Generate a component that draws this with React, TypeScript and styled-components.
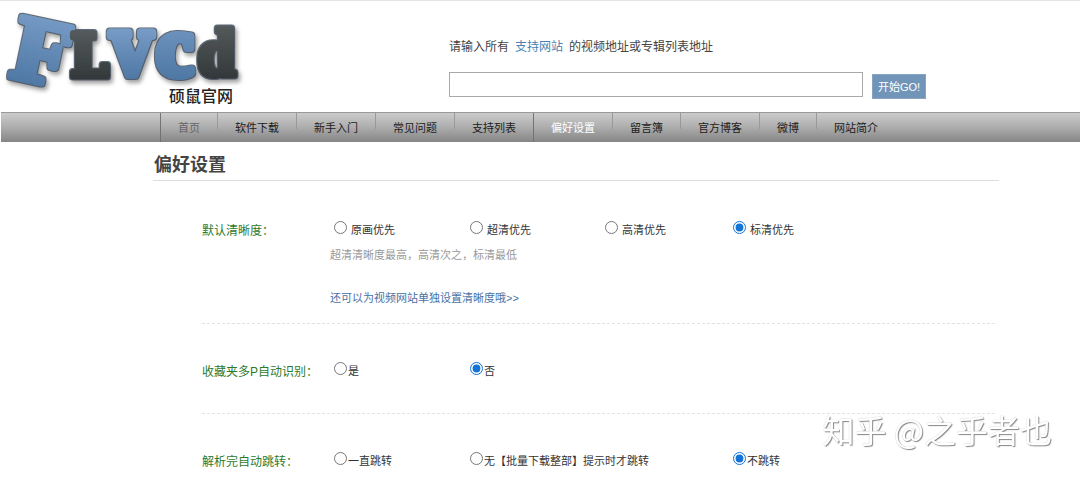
import React from 'react';
import styled, { createGlobalStyle } from 'styled-components';

const GlobalStyle = createGlobalStyle`
  * { box-sizing: border-box; }
  body {
    margin: 0;
    background: #fff;
    color: #333;
    font-family: "Liberation Sans", "Noto Sans CJK SC", sans-serif;
    font-size: 11px;
    line-height: 16px;
  }
  a { text-decoration: none; }
`;

const Page = styled.div`
  border-top: 1px solid #e4e4e4;
`;

const Header = styled.header`
  display: flex;
  align-items: flex-start;
  height: 111px;
  padding-right: 154px;
`;

const LogoLink = styled.a`
  flex: none;
  width: 250px;
  margin-right: 199px;
  svg { display: block; }
`;

const SearchForm = styled.form`
  flex: 1;
  min-width: 0;
  padding-top: 36px;
`;

const Prompt = styled.label`
  display: block;
  font-size: 12px;
  line-height: 20px;
  color: #444;
`;

const PromptLink = styled.a`
  margin: 0 6px;
  color: #4a7fb0;
`;

const SearchRow = styled.div`
  display: flex;
  align-items: flex-end;
  gap: 9px;
  padding-top: 15px;
`;

const AddressInput = styled.input`
  flex: 1;
  min-width: 0;
  height: 25px;
  padding: 0 6px;
  border: 1px solid #aaa;
  background: #fff;
  font: inherit;
`;

const GoButton = styled.button`
  width: 54px;
  height: 25px;
  margin-bottom: -2px;
  padding: 0;
  border: 1px solid #86a3c0;
  background: #7195b8;
  color: #fff;
  font: inherit;
  white-space: nowrap;
`;

const Nav = styled.nav`
  display: flex;
  height: 30px;
  margin-left: 1px;
  padding-left: 159px;
  border-top: 1px solid #999;
  background: linear-gradient(#cbcbcb, #b0b0b0 45%, #858585);
`;

const NavItem = styled.a<{ $tone?: string; $strong?: boolean }>`
  padding: 7px 17px 0;
  border-left: 1px solid;
  border-image: ${(p) =>
    p.$strong
      ? 'linear-gradient(#777, #707070) 1'
      : 'linear-gradient(#999 55%, transparent 55%) 1'};
  color: ${(p) => p.$tone || '#1c1c1c'};
  white-space: nowrap;
`;

const Main = styled.main`
  margin: 0 81px 0 153px;
`;

const Title = styled.h1`
  margin: 0;
  padding: 11px 0 3px 1px;
  border-bottom: 1px solid #ddd;
  color: #444;
  font-size: 18px;
  line-height: 24px;
`;

const Setting = styled.fieldset`
  display: flex;
  margin: 0 4px 0 49px;
  padding: 36px 0 33px;
  border: 0;
  border-bottom: 1px dashed #e2e2e2;
  &:first-of-type { padding: 38px 0 17px; }
  &:last-of-type { border-bottom: 0; padding-bottom: 0; }
`;

const SettingName = styled.div`
  flex: none;
  width: 128px;
  padding-top: 4px;
  color: #2c7a2c;
  font-size: 12px;
`;

const Options = styled.div`
  display: grid;
  grid-template-columns: 136px 135px 128px auto;
`;

const OptionLabel = styled.label<{ $column: number; $spaced?: boolean }>`
  grid-row: 1;
  grid-column-start: ${(p) => p.$column};
  display: flex;
  align-items: flex-start;
  gap: ${(p) => (p.$spaced ? 4 : 1)}px;
  padding: 2px 0 0 4px;
  white-space: nowrap;
`;

const Radio = styled.input`
  width: 13px;
  height: 13px;
  margin: 0;
  accent-color: #1473d6;
`;

const Caption = styled.span`
  padding-top: 1px;
`;

const Hint = styled.p`
  margin: 0;
  padding-top: 9px;
  color: #999;
`;

const MoreLink = styled.a`
  display: inline-block;
  padding-top: 27px;
  color: #4a6fa5;
`;

const Watermark = styled.div`
  position: fixed;
  right: 28px;
  bottom: 28px;
  color: #fff;
  font-family: "Noto Sans CJK SC", sans-serif;
  font-size: 32px;
  line-height: 40px;
  text-shadow: 1px 1px 1px #888, 0 0 1px #bbb;
  white-space: nowrap;
  pointer-events: none;
`;

function Logo() {
  const slab = '"DejaVu Serif Condensed", "DejaVu Serif", serif';
  const round = '"Liberation Serif", serif';
  return (
    <svg width="250" height="110" viewBox="0 1 250 110" role="img" aria-label="FLVcd 硕鼠官网">
      <defs>
        <linearGradient id="blue" x1="0" y1="0" x2="0" y2="1">
          <stop offset="0" stopColor="#7da2cc" />
          <stop offset="1" stopColor="#47709d" />
        </linearGradient>
        <linearGradient id="dark" x1="0" y1="0" x2="0" y2="1">
          <stop offset="0" stopColor="#5a6061" />
          <stop offset="1" stopColor="#2c3133" />
        </linearGradient>
        <filter id="relief" x="-10%" y="-10%" width="125%" height="130%">
          <feMorphology in="SourceAlpha" operator="dilate" radius="1" result="edge" />
          <feFlood floodColor="#3a4a5c" floodOpacity="0.8" />
          <feComposite in2="edge" operator="in" result="rim" />
          <feGaussianBlur in="edge" stdDeviation="2" result="soft" />
          <feOffset in="soft" dx="2" dy="3" result="shade" />
          <feFlood floodColor="#777" floodOpacity="0.7" />
          <feComposite in2="shade" operator="in" result="shadow" />
          <feMerge>
            <feMergeNode in="shadow" />
            <feMergeNode in="rim" />
            <feMergeNode in="SourceGraphic" />
          </feMerge>
        </filter>
      </defs>
      <g filter="url(#relief)" fontWeight="700" strokeLinejoin="round" strokeWidth="8">
        <g fill="url(#blue)" stroke="url(#blue)">
          <text x="15" y="82" fontFamily={round} fontSize="92" strokeWidth="7" transform="rotate(12 40 48)">F</text>
          <text x="111" y="75" fontFamily={slab} fontSize="58">V</text>
          <text x="156" y="75" fontFamily={round} fontSize="84">c</text>
        </g>
        <g fill="url(#dark)" stroke="url(#dark)">
          <text x="71" y="76" fontFamily={slab} fontSize="58" strokeWidth="7">L</text>
          <text x="198" y="75" fontFamily={round} fontSize="66" strokeWidth="7">d</text>
        </g>
      </g>
      <text x="169" y="102" fontFamily="Noto Sans CJK SC, sans-serif" fontSize="16" fontWeight="500" fill="#222">
        硕鼠官网
      </text>
    </svg>
  );
}

const navItems = [
  { text: '首页', tone: '#666', strong: true },
  { text: '软件下载' },
  { text: '新手入门' },
  { text: '常见问题' },
  { text: '支持列表' },
  { text: '偏好设置', tone: '#fff', strong: true },
  { text: '留言簿' },
  { text: '官方博客' },
  { text: '微博' },
  { text: '网站简介' },
];

type Choice = { text: string; column: number; checked?: boolean };

function Choices({ name, items, spaced }: { name: string; items: Choice[]; spaced?: boolean }) {
  return (
    <Options>
      {items.map((item) => (
        <OptionLabel key={item.text} $column={item.column} $spaced={spaced}>
          <Radio type="radio" name={name} defaultChecked={item.checked} />
          <Caption>{item.text}</Caption>
        </OptionLabel>
      ))}
    </Options>
  );
}

export default function App() {
  return (
    <>
      <GlobalStyle />
      <Page>
        <Header>
          <LogoLink href="#">
            <Logo />
          </LogoLink>
          <SearchForm onSubmit={(e: React.FormEvent) => e.preventDefault()}>
            <Prompt htmlFor="address">
              请输入所有<PromptLink href="#">支持网站</PromptLink>的视频地址或专辑列表地址
            </Prompt>
            <SearchRow>
              <AddressInput id="address" type="text" />
              <GoButton type="submit">开始GO!</GoButton>
            </SearchRow>
          </SearchForm>
        </Header>
        <Nav>
          {navItems.map((item) => (
            <NavItem key={item.text} href="#" $tone={item.tone} $strong={item.strong}>
              {item.text}
            </NavItem>
          ))}
        </Nav>
        <Main>
          <Title>偏好设置</Title>
          <Setting aria-labelledby="quality-name">
            <SettingName id="quality-name">默认清晰度：</SettingName>
            <div>
              <Choices
                name="quality"
                spaced
                items={[
                  { text: '原画优先', column: 1 },
                  { text: '超清优先', column: 2 },
                  { text: '高清优先', column: 3 },
                  { text: '标清优先', column: 4, checked: true },
                ]}
              />
              <Hint>超清清晰度最高，高清次之，标清最低</Hint>
              <MoreLink href="#">还可以为视频网站单独设置清晰度哦&gt;&gt;</MoreLink>
            </div>
          </Setting>
          <Setting aria-labelledby="favorites-name">
            <SettingName id="favorites-name">收藏夹多P自动识别：</SettingName>
            <Choices
              name="favorites"
              items={[
                { text: '是', column: 1 },
                { text: '否', column: 2, checked: true },
              ]}
            />
          </Setting>
          <Setting aria-labelledby="jump-name">
            <SettingName id="jump-name">解析完自动跳转：</SettingName>
            <Choices
              name="jump"
              items={[
                { text: '一直跳转', column: 1 },
                { text: '无【批量下载整部】提示时才跳转', column: 2 },
                { text: '不跳转', column: 4, checked: true },
              ]}
            />
          </Setting>
        </Main>
        <Watermark>知乎 @之乎者也</Watermark>
      </Page>
    </>
  );
}
